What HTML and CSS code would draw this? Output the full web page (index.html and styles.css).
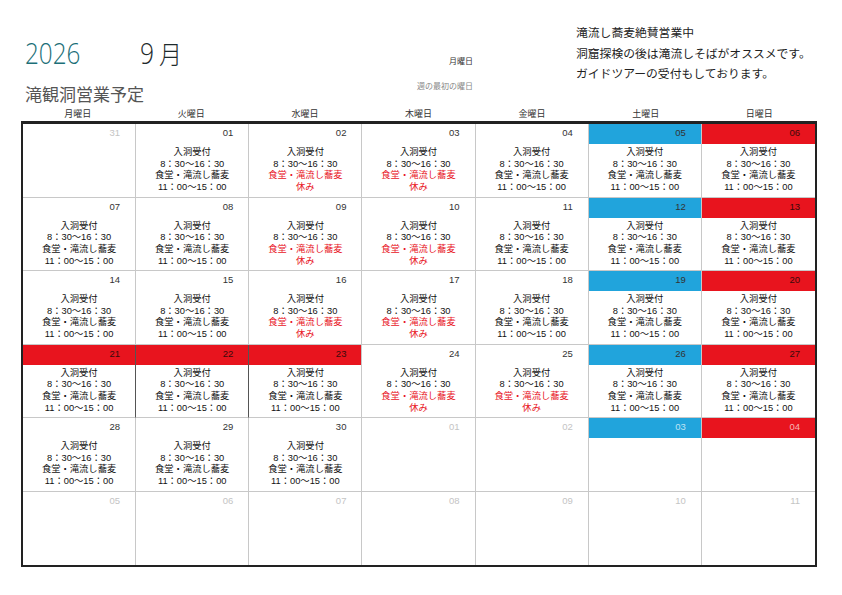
FILE: index.html
```html
<!DOCTYPE html>
<html lang="ja">
<head>
<meta charset="utf-8">
<title>滝観洞営業予定 2026年9月</title>
<link rel="stylesheet" href="styles.css">
</head>
<body>
<div class="page">
  <header class="top">
    <div class="left">
      <div class="row1">
        <span class="year">2026</span>
        <span class="month"><span class="mnum">9</span><span class="mkan">月</span></span>
        <span class="small first-day">月曜日</span>
      </div>
      <div class="row2">
        <h1 class="title">滝観洞営業予定</h1>
        <span class="small gray week-label">週の最初の曜日</span>
      </div>
    </div>
    <div class="notes">
      <p>滝流し蕎麦絶賛営業中</p>
      <p>洞窟探検の後は滝流しそばがオススメです。</p>
      <p>ガイドツアーの受付もしております。</p>
    </div>
  </header>

  <div class="weekdays">
    <span>月曜日</span><span>火曜日</span><span>水曜日</span><span>木曜日</span><span>金曜日</span><span>土曜日</span><span>日曜日</span>
  </div>

  <div class="cal">
    <!-- row 1 -->
    <div class="cell off"><div class="dh">31</div></div>
    <div class="cell"><div class="dh">01</div><div class="info"><p>入洞受付</p><p>8：30〜16：30</p><p>食堂・滝流し蕎麦</p><p>11：00〜15：00</p></div></div>
    <div class="cell"><div class="dh">02</div><div class="info"><p>入洞受付</p><p>8：30〜16：30</p><p class="red">食堂・滝流し蕎麦</p><p class="red">休み</p></div></div>
    <div class="cell"><div class="dh">03</div><div class="info"><p>入洞受付</p><p>8：30〜16：30</p><p class="red">食堂・滝流し蕎麦</p><p class="red">休み</p></div></div>
    <div class="cell"><div class="dh">04</div><div class="info"><p>入洞受付</p><p>8：30〜16：30</p><p>食堂・滝流し蕎麦</p><p>11：00〜15：00</p></div></div>
    <div class="cell sat"><div class="dh">05</div><div class="info"><p>入洞受付</p><p>8：30〜16：30</p><p>食堂・滝流し蕎麦</p><p>11：00〜15：00</p></div></div>
    <div class="cell sun last"><div class="dh">06</div><div class="info"><p>入洞受付</p><p>8：30〜16：30</p><p>食堂・滝流し蕎麦</p><p>11：00〜15：00</p></div></div>

    <!-- row 2 -->
    <div class="cell"><div class="dh">07</div><div class="info"><p>入洞受付</p><p>8：30〜16：30</p><p>食堂・滝流し蕎麦</p><p>11：00〜15：00</p></div></div>
    <div class="cell"><div class="dh">08</div><div class="info"><p>入洞受付</p><p>8：30〜16：30</p><p>食堂・滝流し蕎麦</p><p>11：00〜15：00</p></div></div>
    <div class="cell"><div class="dh">09</div><div class="info"><p>入洞受付</p><p>8：30〜16：30</p><p class="red">食堂・滝流し蕎麦</p><p class="red">休み</p></div></div>
    <div class="cell"><div class="dh">10</div><div class="info"><p>入洞受付</p><p>8：30〜16：30</p><p class="red">食堂・滝流し蕎麦</p><p class="red">休み</p></div></div>
    <div class="cell"><div class="dh">11</div><div class="info"><p>入洞受付</p><p>8：30〜16：30</p><p>食堂・滝流し蕎麦</p><p>11：00〜15：00</p></div></div>
    <div class="cell sat"><div class="dh">12</div><div class="info"><p>入洞受付</p><p>8：30〜16：30</p><p>食堂・滝流し蕎麦</p><p>11：00〜15：00</p></div></div>
    <div class="cell sun last"><div class="dh">13</div><div class="info"><p>入洞受付</p><p>8：30〜16：30</p><p>食堂・滝流し蕎麦</p><p>11：00〜15：00</p></div></div>

    <!-- row 3 -->
    <div class="cell"><div class="dh">14</div><div class="info"><p>入洞受付</p><p>8：30〜16：30</p><p>食堂・滝流し蕎麦</p><p>11：00〜15：00</p></div></div>
    <div class="cell"><div class="dh">15</div><div class="info"><p>入洞受付</p><p>8：30〜16：30</p><p>食堂・滝流し蕎麦</p><p>11：00〜15：00</p></div></div>
    <div class="cell"><div class="dh">16</div><div class="info"><p>入洞受付</p><p>8：30〜16：30</p><p class="red">食堂・滝流し蕎麦</p><p class="red">休み</p></div></div>
    <div class="cell"><div class="dh">17</div><div class="info"><p>入洞受付</p><p>8：30〜16：30</p><p class="red">食堂・滝流し蕎麦</p><p class="red">休み</p></div></div>
    <div class="cell"><div class="dh">18</div><div class="info"><p>入洞受付</p><p>8：30〜16：30</p><p>食堂・滝流し蕎麦</p><p>11：00〜15：00</p></div></div>
    <div class="cell sat"><div class="dh">19</div><div class="info"><p>入洞受付</p><p>8：30〜16：30</p><p>食堂・滝流し蕎麦</p><p>11：00〜15：00</p></div></div>
    <div class="cell sun last"><div class="dh">20</div><div class="info"><p>入洞受付</p><p>8：30〜16：30</p><p>食堂・滝流し蕎麦</p><p>11：00〜15：00</p></div></div>

    <!-- row 4 -->
    <div class="cell hol dk"><div class="dh">21</div><div class="info"><p>入洞受付</p><p>8：30〜16：30</p><p>食堂・滝流し蕎麦</p><p>11：00〜15：00</p></div></div>
    <div class="cell hol dk"><div class="dh">22</div><div class="info"><p>入洞受付</p><p>8：30〜16：30</p><p>食堂・滝流し蕎麦</p><p>11：00〜15：00</p></div></div>
    <div class="cell hol"><div class="dh">23</div><div class="info"><p>入洞受付</p><p>8：30〜16：30</p><p>食堂・滝流し蕎麦</p><p>11：00〜15：00</p></div></div>
    <div class="cell"><div class="dh">24</div><div class="info"><p>入洞受付</p><p>8：30〜16：30</p><p class="red">食堂・滝流し蕎麦</p><p class="red">休み</p></div></div>
    <div class="cell"><div class="dh">25</div><div class="info"><p>入洞受付</p><p>8：30〜16：30</p><p class="red">食堂・滝流し蕎麦</p><p class="red">休み</p></div></div>
    <div class="cell sat"><div class="dh">26</div><div class="info"><p>入洞受付</p><p>8：30〜16：30</p><p>食堂・滝流し蕎麦</p><p>11：00〜15：00</p></div></div>
    <div class="cell sun last"><div class="dh">27</div><div class="info"><p>入洞受付</p><p>8：30〜16：30</p><p>食堂・滝流し蕎麦</p><p>11：00〜15：00</p></div></div>

    <!-- row 5 -->
    <div class="cell"><div class="dh">28</div><div class="info"><p>入洞受付</p><p>8：30〜16：30</p><p>食堂・滝流し蕎麦</p><p>11：00〜15：00</p></div></div>
    <div class="cell"><div class="dh">29</div><div class="info"><p>入洞受付</p><p>8：30〜16：30</p><p>食堂・滝流し蕎麦</p><p>11：00〜15：00</p></div></div>
    <div class="cell"><div class="dh">30</div><div class="info"><p>入洞受付</p><p>8：30〜16：30</p><p>食堂・滝流し蕎麦</p><p>11：00〜15：00</p></div></div>
    <div class="cell off"><div class="dh">01</div></div>
    <div class="cell off"><div class="dh">02</div></div>
    <div class="cell off sat"><div class="dh">03</div></div>
    <div class="cell off sun last"><div class="dh">04</div></div>

    <!-- row 6 -->
    <div class="cell off bottom"><div class="dh">05</div></div>
    <div class="cell off bottom"><div class="dh">06</div></div>
    <div class="cell off bottom"><div class="dh">07</div></div>
    <div class="cell off bottom"><div class="dh">08</div></div>
    <div class="cell off bottom"><div class="dh">09</div></div>
    <div class="cell off bottom"><div class="dh">10</div></div>
    <div class="cell off bottom last"><div class="dh">11</div></div>
  </div>
</div>
</body>
</html>
```
FILE: styles.css
```css
* { box-sizing: border-box; }

html, body {
  margin: 0;
  padding: 0;
  background: #ffffff;
}

body {
  font-family: "Noto Sans CJK JP", "Noto Sans", sans-serif;
  color: #222;
  width: 842px;
  height: 595px;
  overflow: hidden;
}

p, h1 { margin: 0; }

.page {
  display: flex;
  flex-direction: column;
}

/* ---------- header ---------- */
.top {
  height: 106px;
  display: flex;
  padding-left: 25px;
}

.left {
  width: 448px;
  display: flex;
  flex-direction: column;
}

.row1 {
  margin-top: 36px;
  height: 34px;
  display: flex;
  align-items: flex-end;
}

.year {
  display: inline-block;
  width: 115px;
  font-family: "Open Sans", "Noto Sans", sans-serif;
  font-weight: 300;
  font-size: 30px;
  line-height: 34px;
  color: #1c6f78;
  transform: scaleX(0.81);
  transform-origin: left center;
}

.month {
  display: flex;
  align-items: center;
  height: 34px;
  color: #1e2a2c;
}

.mnum {
  display: inline-block;
  width: 19px;
  font-family: "Open Sans", "Noto Sans", sans-serif;
  font-weight: 300;
  font-size: 30px;
  line-height: 34px;
  transform: scaleX(0.82);
  transform-origin: left center;
}

.mkan {
  display: inline-block;
  font-family: "Noto Sans CJK JP", sans-serif;
  font-weight: 300;
  font-size: 23px;
  line-height: 34px;
  transform: scaleY(1.08);
}

.small {
  font-size: 8px;
  line-height: 12px;
  color: #333;
}

.gray { color: #888; }

.first-day {
  margin-left: auto;
  margin-bottom: 3px;
}

.row2 {
  display: flex;
  align-items: flex-start;
}

.title {
  margin-top: 13px;
  font-size: 17px;
  line-height: 22px;
  font-weight: 400;
  color: #555;
}

.week-label {
  margin-left: auto;
  margin-top: 10px;
}

.notes {
  margin-left: 103px;
  padding-top: 22px;
  font-size: 11.8px;
  line-height: 20.5px;
  color: #222;
}

/* ---------- weekday labels ---------- */
.weekdays {
  margin-left: 21px;
  width: 795px;
  height: 15px;
  display: grid;
  grid-template-columns: repeat(7, 1fr);
  font-size: 9px;
  line-height: 15px;
  text-align: center;
  color: #333;
}

/* ---------- calendar grid ---------- */
.cal {
  margin-left: 21px;
  width: 796px;
  height: 446px;
  border: 2px solid #222;
  border-top-width: 3px;
  display: grid;
  grid-template-columns: repeat(7, 1fr);
  grid-template-rows: repeat(6, 1fr);
}

.cell {
  border-right: 1.5px solid #c8c8c8;
  border-bottom: 1.5px solid #c8c8c8;
  display: flex;
  flex-direction: column;
  min-width: 0;
}

.cell.last { border-right: none; }
.cell.bottom { border-bottom: none; }
.cell.dk { border-right-color: #555; }

.dh {
  height: 20px;
  padding-right: 15px;
  padding-bottom: 3px;
  text-align: right;
  font-family: "Liberation Sans", "Noto Sans CJK JP", sans-serif;
  font-size: 9.5px;
  line-height: 17px;
  color: #333;
}

.sat .dh { background: #21a4dc; }
.sun .dh,
.hol .dh { background: #e8141e; color: #3a0a0a; }

.off .dh { color: #c4c4c4; }
.off.sat .dh { color: #bfe3f4; }
.off.sun .dh { color: #f6b4b6; }

.info {
  padding-top: 3px;
  text-align: center;
  font-family: "Liberation Sans", "Noto Sans CJK JP", sans-serif;
  font-size: 9.3px;
  line-height: 11.7px;
  color: #111;
}

.info .red { color: #e8141e; }
```
